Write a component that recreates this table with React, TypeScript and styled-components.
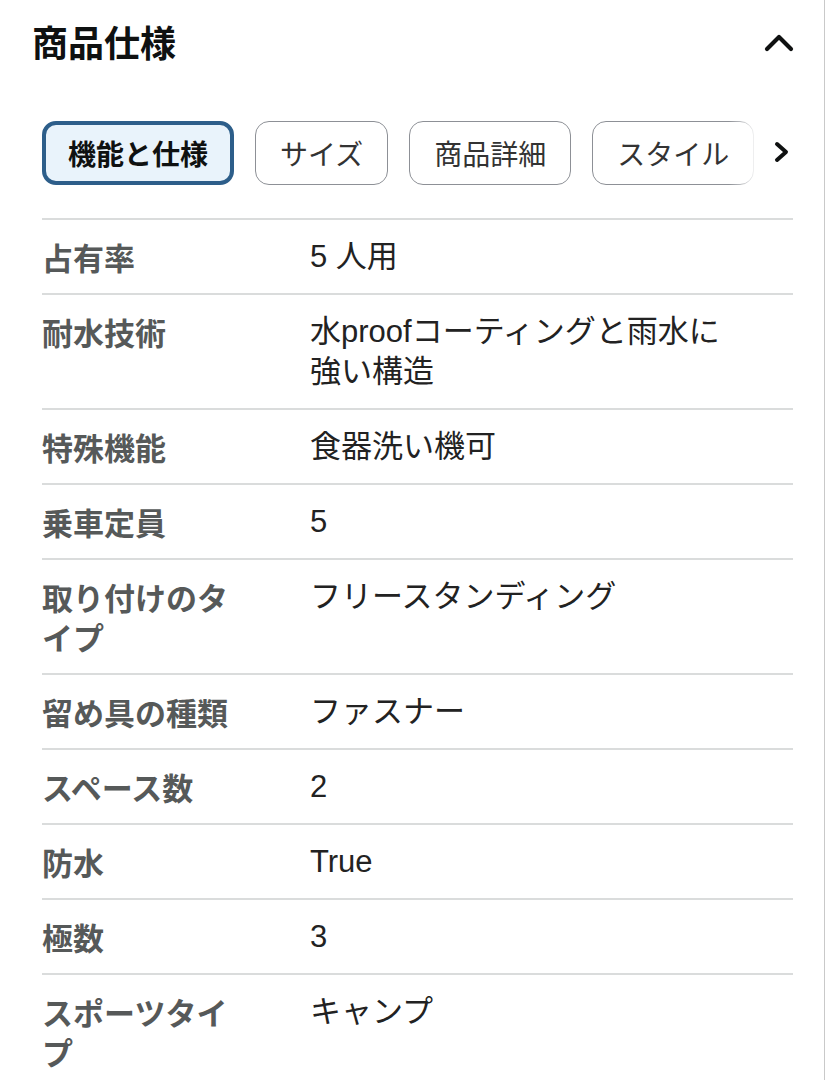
import React from "react";
import styled, { createGlobalStyle } from "styled-components";

const GlobalStyle = createGlobalStyle`
  html, body {
    margin: 0;
    padding: 0;
    background: #ffffff;
  }
  body {
    font-family: "Liberation Sans", "Noto Sans CJK JP", sans-serif;
    -webkit-font-smoothing: antialiased;
  }
`;

const Page = styled.div`
  width: 825px;
  min-height: 1080px;
  box-sizing: border-box;
  border-right: 1px solid #c9c9c9;
  background: #fff;
  overflow: hidden;
`;

const Header = styled.header`
  display: flex;
  align-items: center;
  justify-content: space-between;
  padding: 23px 29px 0 32px;
`;

const Title = styled.h2`
  margin: 0;
  font-size: 36px;
  line-height: 44px;
  font-weight: 700;
  color: #0f1111;
`;

const IconButton = styled.button`
  display: flex;
  align-items: center;
  justify-content: center;
  padding: 0;
  border: none;
  background: transparent;
  cursor: pointer;
  color: #0f1111;
`;

const TabBar = styled.div`
  display: flex;
  align-items: center;
  margin: 54px 31px 0 42px;
  gap: 8px;
`;

const TabViewport = styled.div`
  position: relative;
  flex: 1;
  overflow: hidden;
`;

const TabTrack = styled.div`
  display: flex;
  gap: 21px;
  width: max-content;
`;

const Fade = styled.div`
  position: absolute;
  top: 0;
  right: 0;
  bottom: 0;
  width: 34px;
  background: linear-gradient(to right, rgba(255, 255, 255, 0), #ffffff 85%);
  pointer-events: none;
`;

const Tab = styled.button<{ $active?: boolean }>`
  flex: none;
  height: 64px;
  box-sizing: border-box;
  padding: 0 ${(p) => (p.$active ? "22px" : "24px")};
  border-radius: 14px;
  border: ${(p) => (p.$active ? "4px solid #2d5e8a" : "1.5px solid #8d9096")};
  background: ${(p) => (p.$active ? "#e9f3fb" : "#ffffff")};
  color: ${(p) => (p.$active ? "#0f1111" : "#333333")};
  font-family: "Noto Sans CJK JP", sans-serif;
  font-size: 28px;
  font-weight: ${(p) => (p.$active ? 700 : 400)};
  line-height: 1;
  cursor: pointer;
`;

const Table = styled.dl`
  margin: 33px 31px 0 42px;
  padding: 0;
`;

const Row = styled.div`
  display: grid;
  grid-template-columns: 268px 1fr;
  border-top: 2px solid #dadcdc;
  padding: 17px 0 16px;
`;

const Label = styled.dt`
  margin: 0;
  max-width: 205px;
  font-family: "Noto Sans CJK JP", sans-serif;
  font-size: 31px;
  line-height: 40px;
  font-weight: 700;
  color: #565959;
`;

const Value = styled.dd`
  margin: 0;
  max-width: 428px;
  font-family: "Liberation Sans", "Noto Sans CJK JP", sans-serif;
  font-size: 31px;
  line-height: 40px;
  font-weight: 400;
  color: #222222;
`;

const tabs = ["機能と仕様", "サイズ", "商品詳細", "スタイル"];

const specs: [string, string][] = [
  ["占有率", "5 人用"],
  ["耐水技術", "水proofコーティングと雨水に強い構造"],
  ["特殊機能", "食器洗い機可"],
  ["乗車定員", "5"],
  ["取り付けのタイプ", "フリースタンディング"],
  ["留め具の種類", "ファスナー"],
  ["スペース数", "2"],
  ["防水", "True"],
  ["極数", "3"],
  ["スポーツタイプ", "キャンプ"],
];

export default function App() {
  return (
    <>
      <GlobalStyle />
      <Page>
        <Header>
          <Title>商品仕様</Title>
          <IconButton aria-label="折りたたむ">
            <svg width="32" height="22" viewBox="0 0 32 22" fill="none">
              <polyline
                points="4,15 16,3 28,15"
                stroke="currentColor"
                strokeWidth="4.2"
                strokeLinecap="round"
                strokeLinejoin="round"
              />
            </svg>
          </IconButton>
        </Header>

        <TabBar>
          <TabViewport>
            <TabTrack>
              {tabs.map((t, i) => (
                <Tab key={t} $active={i === 0}>
                  {t}
                </Tab>
              ))}
            </TabTrack>
            <Fade />
          </TabViewport>
          <IconButton aria-label="次へ">
            <svg width="22" height="26" viewBox="0 0 22 26" fill="none">
              <polyline
                points="6,4 15,12 6,20"
                stroke="currentColor"
                strokeWidth="4"
                strokeLinecap="round"
                strokeLinejoin="round"
              />
            </svg>
          </IconButton>
        </TabBar>

        <Table>
          {specs.map(([k, v]) => (
            <Row key={k}>
              <Label>{k}</Label>
              <Value>{v}</Value>
            </Row>
          ))}
        </Table>
      </Page>
    </>
  );
}
